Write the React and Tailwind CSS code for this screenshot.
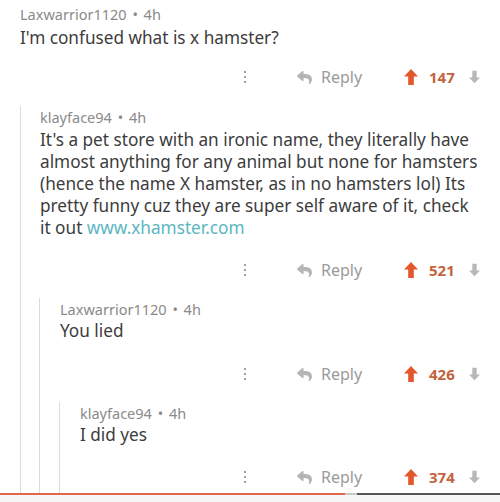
import { FaReply } from "react-icons/fa";

function UpArrow({ className }) {
  return (
    <svg viewBox="0 0 14 16" className={className} fill="currentColor">
      <path d="M7 0 L14 7.5 L9.8 7.5 L9.8 16 L4.2 16 L4.2 7.5 L0 7.5 Z" />
    </svg>
  );
}

function DownArrow({ className }) {
  return (
    <svg viewBox="0 0 14 16" className={className} fill="currentColor">
      <path d="M7 16 L14 8.5 L9.8 8.5 L9.8 0 L4.2 0 L4.2 8.5 L0 8.5 Z" />
    </svg>
  );
}

function Actions({ votes, className }) {
  return (
    <div className={"flex h-[24px] items-center justify-end pr-[20px] " + className}>
      <div className="flex flex-col gap-[3px]">
        <span className="h-[2px] w-[2px] bg-gray-400" />
        <span className="h-[2px] w-[2px] bg-gray-400" />
        <span className="h-[2px] w-[2px] bg-gray-400" />
      </div>
      <FaReply className="ml-[51px] text-[15px] text-[#b5b5b5]" />
      <span className="ml-[9px] w-[40px] text-[16px] text-[#9a9a9a]">Reply</span>
      <UpArrow className="ml-[43px] h-[16px] w-[14px] text-[#e4562b]" />
      <span className="ml-[11px] w-[26px] text-[15px] font-bold text-[#c4623d]">{votes}</span>
      <DownArrow className="ml-[14px] h-[14px] w-[11px] text-[#b8b8b8]" />
    </div>
  );
}

function Meta({ name, className }) {
  return (
    <div className={"h-[20px] text-[14.5px] leading-[20px] text-[#8a8a8a] " + className}>
      {name} <span className="mx-[2px]">•</span> 4h
    </div>
  );
}

export default function App() {
  return (
    <div
      className="flex h-[502px] w-[500px] flex-col bg-white"
      style={{ fontFamily: '"Noto Sans", "Open Sans", sans-serif' }}
    >
      <div className="flex-1 overflow-hidden">
        <div className="pl-[20px] pt-[4px]">
          <Meta name="Laxwarrior1120" />
          <p className="mt-[3px] text-[17.2px] leading-[22px] text-[#3c3c3c]">
            I'm confused what is x hamster?
          </p>
        </div>
        <Actions votes="147" className="mt-[16px]" />

        <div className="ml-[20px] mt-[17px] border-l border-[#dcdcdc] pb-[4px]">
          <div className="pl-[19px]">
            <Meta name="klayface94" className="pt-[1px]" />
            <p className="mt-[3px] pr-[8px] text-[17.2px] leading-[22px] text-[#3c3c3c]">
              It's a pet store with an ironic name, they literally have
              almost anything for any animal but none for hamsters (hence
              the name X hamster, as in no hamsters lol) Its pretty funny cuz
              they are super self aware of it, check
              <br />
              it out <span className="text-[#5bb6c2]">www.xhamster.com</span>
            </p>
          </div>
          <Actions votes="521" className="mt-[19px]" />

          <div className="ml-[18px] mt-[16px] border-l border-[#dcdcdc]">
            <div className="pl-[20px]">
              <Meta name="Laxwarrior1120" className="pt-[1px]" />
              <p className="mt-[2px] text-[17.2px] leading-[22px] text-[#3c3c3c]">You lied</p>
            </div>
            <Actions votes="426" className="mt-[20px]" />

            <div className="ml-[19px] mt-[16px] border-l border-[#dcdcdc] pb-[10px]">
              <div className="pl-[20px]">
                <Meta name="klayface94" className="pt-[1px]" />
                <p className="mt-[2px] text-[17.2px] leading-[22px] text-[#3c3c3c]">I did yes</p>
              </div>
              <Actions votes="374" className="mt-[19px]" />
            </div>
          </div>
        </div>
      </div>
      <div className="flex h-[2px] shrink-0">
        <div className="w-[345px] bg-[#e0674a]" />
        <div className="w-[12px] bg-[#c8c8c8]" />
        <div className="flex-1 bg-[#555]" />
      </div>
      <div className="h-[7px] shrink-0 bg-[#f7f7f7]" />
    </div>
  );
}
